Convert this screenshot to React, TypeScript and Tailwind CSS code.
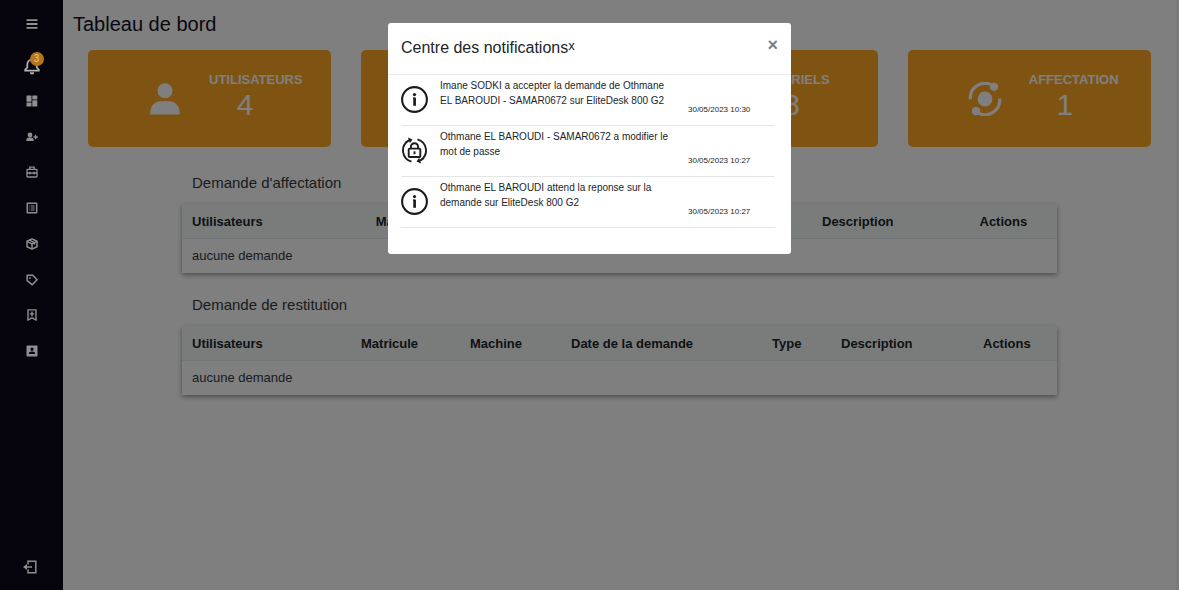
import React from "react";

function MenuIcon() {
  return (
    <svg width="12" height="10" viewBox="0 0 12 10" stroke="currentColor" strokeWidth="1.800">
      <path d="M.5 1.200h11M.5 5h11M.5 8.800h11" />
    </svg>
  );
}

function BellIcon() {
  return (
    <svg width="16" height="18" viewBox="0 0 16 18" fill="none" stroke="currentColor" strokeWidth="1.700">
      <path d="M8 2.500C5 2.500 3.300 4.800 3.300 7.500V10.500L1.200 12.600V13.700H14.800V12.600L12.700 10.500V7.500C12.700 4.800 11 2.500 8 2.500Z" />
      <path d="M5.800 15.200h4.400a2.200 2.200 0 0 1-4.400 0z" fill="currentColor" stroke="none" />
    </svg>
  );
}

function DashboardIcon() {
  return (
    <svg width="12" height="12" viewBox="0 0 12 12" fill="currentColor">
      <rect x=".5" y=".5" width="5" height="6.300" rx=".6" />
      <rect x=".5" y="7.600" width="5" height="3.900" rx=".6" />
      <rect x="6.300" y=".5" width="5" height="3.900" rx=".6" />
      <rect x="6.300" y="5.200" width="5" height="6.300" rx=".6" />
    </svg>
  );
}

function UserPlusIcon() {
  return (
    <svg width="12" height="10" viewBox="0 0 12 10" fill="currentColor">
      <circle cx="4" cy="3" r="2.400" />
      <path d="M.3 9V8.300C.3 6.500 1.500 5.500 3.200 5.500H4.800C6.500 5.500 7.700 6.500 7.700 8.300V9Z" />
      <path d="M8.900 2.800h1.400v1.500h1.500v1.400h-1.500v1.500H8.900V5.700H7.400V4.300h1.500z" />
    </svg>
  );
}

function ToolboxIcon() {
  return (
    <svg width="12" height="12" viewBox="0 0 12 12" fill="none" stroke="currentColor" strokeWidth="1.300">
      <rect x="1" y="3.300" width="10" height="7.700" rx=".7" />
      <path d="M3.800 3.300V1.200h4.400v2.100M1 7h10M3.900 5.800v2.600M8.100 5.800v2.600" />
    </svg>
  );
}

function ListIcon() {
  return (
    <svg width="12" height="12" viewBox="0 0 12 12" fill="none" stroke="currentColor" strokeWidth="1.500">
      <rect x="1.300" y="1.300" width="9.400" height="9.400" rx=".3" />
      <path d="M3.300 4h1M5 4h3.700M3.300 6h1M5 6h3.700M3.300 8h1M5 8h3.700" strokeWidth="1.100" />
    </svg>
  );
}

function PackageIcon() {
  return (
    <svg width="12" height="12" viewBox="0 0 12 12" fill="none" stroke="currentColor" strokeWidth="1.500">
      <path d="M6 .9L11 3.300V8.700L6 11.100L1 8.700V3.300Z" strokeLinejoin="round" />
      <path d="M1 3.400L6 5.900L11 3.400M6 5.900V11M3.400 2.200L8.500 4.700V6.500" />
    </svg>
  );
}

function TagIcon() {
  return (
    <svg width="12" height="12" viewBox="0 0 12 12" fill="none" stroke="currentColor" strokeWidth="1.500">
      <path d="M1.200 1.200H6.800L11 5.800L6.300 10.800L1.200 6.600Z" strokeLinejoin="round" />
      <circle cx="4" cy="4" r=".9" fill="currentColor" stroke="none" />
    </svg>
  );
}

function BookmarkPlusIcon() {
  return (
    <svg width="12" height="12" viewBox="0 0 12 12" fill="none" stroke="currentColor" strokeWidth="1.400">
      <path d="M2 .9H10V11L6 8.900L2 11Z" />
      <path d="M6 2.600V7.200M3.700 4.900H8.300" />
    </svg>
  );
}

function ContactIcon() {
  return (
    <svg width="12" height="12" viewBox="0 0 12 12" fill="currentColor">
      <path
        fillRule="evenodd"
        d="M1.200.5H10.800Q11.500.5 11.500 1.200V10.800Q11.500 11.500 10.800 11.500H1.200Q.5 11.500.5 10.800V1.200Q.5.5 1.200.5ZM6 2.500A1.700 1.700 0 1 0 6 5.900A1.700 1.700 0 1 0 6 2.500ZM2.800 9H9.200C9.200 7.300 7.800 6.600 6 6.600S2.800 7.300 2.800 9Z"
      />
    </svg>
  );
}

function LogoutIcon() {
  return (
    <svg width="14" height="14" viewBox="0 0 14 14" fill="none" stroke="currentColor" strokeWidth="1.500">
      <path d="M5 4.500V1.200H12.800V12.800H5V9.500" />
      <path d="M2.500 7H9" />
      <path d="M0 7L4 3.900V10.100Z" fill="currentColor" stroke="none" />
    </svg>
  );
}

function UserIcon() {
  return (
    <svg width="30" height="32" viewBox="0 0 30 32" fill="currentColor">
      <circle cx="15" cy="7.700" r="7.500" />
      <path d="M.3 31.500V29.500C.3 23 5 18.200 11 18.200H19C25 18.200 29.700 23 29.700 29.500V31.500Z" />
    </svg>
  );
}

function OrbitIcon() {
  return (
    <svg width="34" height="34" viewBox="0 0 34 34" fill="none" stroke="currentColor" strokeWidth="3.200">
      <circle cx="17" cy="17" r="7.400" fill="currentColor" stroke="none" />
      <path d="M2.400 17.500A14.600 14.600 0 0 1 24.500 3.500" />
      <path d="M31.600 16.500A14.600 14.600 0 0 1 9.500 30.500" />
      <circle cx="26" cy="4.800" r="4.100" fill="currentColor" stroke="none" />
      <circle cx="8" cy="29.200" r="4.100" fill="currentColor" stroke="none" />
    </svg>
  );
}

function BriefcaseIcon() {
  return (
    <svg width="34" height="32" viewBox="0 0 34 32" fill="none" stroke="currentColor" strokeWidth="3">
      <path d="M3 9H31V29H3ZM11 9V3H23V9M3 18H31" />
    </svg>
  );
}

function InfoIcon() {
  return (
    <svg width="27" height="27" viewBox="0 0 27 27" fill="none" stroke="currentColor">
      <circle cx="13.500" cy="13.500" r="12.400" strokeWidth="2.100" />
      <circle cx="13.500" cy="8.600" r="1.600" fill="currentColor" stroke="none" />
      <path d="M13.600 11.600V19.800" strokeWidth="2.700" />
      <path d="M12 12.200H13.600" strokeWidth="1.200" />
    </svg>
  );
}

function LockIcon() {
  return (
    <svg width="27" height="27" viewBox="0 0 27 27" fill="none" stroke="currentColor" strokeWidth="1.900">
      <path d="M7 4A11.600 11.600 0 0 0 10.500 24.700" />
      <path d="M20 23A11.600 11.600 0 0 0 16.500 2.300" />
      <path d="M3.200 5.800A12 12 0 0 1 7.500 2.800L7 .6L11.500 2.400L8.800 6.300L8.300 4.400" fill="currentColor" stroke="none" />
      <path d="M23.800 21.200A12 12 0 0 1 19.500 24.200L20 26.400L15.500 24.600L18.200 20.700L18.700 22.600" fill="currentColor" stroke="none" />
      <rect x="7.700" y="11.600" width="11.600" height="8.400" rx="1" />
      <path d="M9.900 11.500V9.800a3.600 3.600 0 0 1 7.200 0V11.500" />
      <path d="M13.500 14.300v3" strokeWidth="1.900" />
    </svg>
  );
}

const navItems = [
  { label: "Tableau de bord", icon: <DashboardIcon /> },
  { label: "Ajouter un utilisateur", icon: <UserPlusIcon /> },
  { label: "Matériels", icon: <ToolboxIcon /> },
  { label: "Liste", icon: <ListIcon /> },
  { label: "Stock", icon: <PackageIcon /> },
  { label: "Marques", icon: <TagIcon /> },
  { label: "Demandes", icon: <BookmarkPlusIcon /> },
  { label: "Profil", icon: <ContactIcon /> },
];

const cards = [
  { id: "users", label: "UTILISATEURS", value: "4", icon: <UserIcon /> },
  { id: "pending", label: "", value: "", icon: null },
  { id: "equipment", label: "MATERIELS", value: "8", icon: <BriefcaseIcon /> },
  { id: "assignment", label: "AFFECTATION", value: "1", icon: <OrbitIcon /> },
];

const assignmentColumns = [
  { name: "Utilisateurs", width: "w-[21%]" },
  { name: "Matricule", width: "w-[13%]" },
  { name: "Machine", width: "w-[13%]" },
  { name: "Date de la demande", width: "w-[25%]" },
  { name: "Description", width: "w-[18%]" },
  { name: "Actions", width: "w-[10%]" },
];

const returnColumns = [
  { name: "Utilisateurs", width: "w-[169px]" },
  { name: "Matricule", width: "w-[109px]" },
  { name: "Machine", width: "w-[101px]" },
  { name: "Date de la demande", width: "w-[201px]" },
  { name: "Type", width: "w-[69px]" },
  { name: "Description", width: "w-[142px]" },
  { name: "Actions", width: "w-[84px]" },
];

const notifications = [
  {
    text: "Imane SODKI a accepter la demande de Othmane EL BAROUDI - SAMAR0672 sur EliteDesk 800 G2",
    date: "30/05/2023 10:30",
    icon: <InfoIcon />,
  },
  {
    text: "Othmane EL BAROUDI - SAMAR0672 a modifier le mot de passe",
    date: "30/05/2023 10:27",
    icon: <LockIcon />,
  },
  {
    text: "Othmane EL BAROUDI attend la reponse sur la demande sur EliteDesk 800 G2",
    date: "30/05/2023 10:27",
    icon: <InfoIcon />,
  },
];

function Sidebar() {
  return (
    <aside className="relative z-20 flex w-[63px] shrink-0 flex-col items-center bg-[#05040c] text-[#8f8f8f]">
      <button aria-label="Menu" className="flex h-12 items-center">
        <MenuIcon />
      </button>
      <button aria-label="Notifications" className="relative flex h-[35px] items-center text-[#b4b4b4]">
        <BellIcon />
        <span className="absolute top-1 left-[6px] flex size-[14px] items-center justify-center rounded-full bg-[#b87419] text-[10px] leading-none text-[#d8c8b0]">
          3
        </span>
      </button>
      <nav className="flex h-[286px] flex-col">
        {navItems.map((item) => (
          <a key={item.label} href="#" aria-label={item.label} className="flex flex-1 items-center">
            {item.icon}
          </a>
        ))}
      </nav>
      <button aria-label="Déconnexion" className="mt-auto mb-[11px] flex h-6 items-center pr-1">
        <LogoutIcon />
      </button>
    </aside>
  );
}

function RequestTable({ title, columns }: { title: string; columns: { name: string; width: string }[] }) {
  return (
    <section>
      <h2 className="px-[10px] pb-[9px] text-[15px] leading-6 text-[#343a40]">{title}</h2>
      <table className="w-full table-fixed text-left text-[13px] leading-5 text-[#212529] shadow-[0_2px_5px_rgba(0,0,0,0.4)]">
        <thead>
          <tr className="border-b border-[#e4eaea] bg-[#f5f9f9]">
            {columns.map((c) => (
              <th key={c.name} className={`${c.width} px-[10px] pt-2 pb-[6px] font-bold whitespace-nowrap`}>
                {c.name}
              </th>
            ))}
          </tr>
        </thead>
        <tbody>
          <tr>
            <td colSpan={columns.length} className="px-[10px] py-[7px] text-[#343a40]">
              aucune demande
            </td>
          </tr>
        </tbody>
      </table>
    </section>
  );
}

function NotificationDialog() {
  return (
    <div
      role="dialog"
      aria-labelledby="notification-title"
      className="w-[403px] rounded-[3px] bg-white pb-[26px] text-[#212529]"
    >
      <header className="flex items-start justify-between border-b border-[#e9ecef] px-[13px] pt-[13px] pb-[14px]">
        <h2 id="notification-title" className="flex items-start text-[16px] leading-6">
          Centre des notifications
          <button className="text-[13px] leading-5">x</button>
        </h2>
        <button aria-label="Fermer" className="text-[18px] leading-[18px] font-bold text-[#7f7f7f]">
          ×
        </button>
      </header>
      <ul className="pr-4 pl-[13px]">
        {notifications.map((n, i) => (
          <li key={i} className="flex h-[51px] border-b border-[#e3e5e7]">
            <span className="pt-[11px] text-[#1c1c1c]">{n.icon}</span>
            <p className="ml-3 w-[234px] pt-[3px] text-[10px] leading-[15px]">{n.text}</p>
            <time className="ml-[14px] self-end pb-[10px] text-[8px] leading-[10px] whitespace-nowrap">{n.date}</time>
          </li>
        ))}
      </ul>
    </div>
  );
}

export default function App() {
  return (
    <div className="flex min-h-screen bg-white font-['Liberation_Sans',Arial,sans-serif]">
      <Sidebar />
      <main className="flex-1 border-r-[3px] border-[#f4f4f4]">
        <h1 className="px-[10px] pt-[9px] text-[20px] leading-[30px] text-[#11101d]">Tableau de bord</h1>
        <div className="grid grid-cols-4 gap-[30px] px-[25px] pt-[11px]">
          {cards.map((card) => (
            <article
              key={card.id}
              className="flex h-[97px] items-center rounded-[5px] bg-[#fea824] pl-[57px] text-white"
            >
              <span className="flex w-10 justify-center">{card.icon}</span>
              <div className="-mt-2 ml-6">
                <h2 className="text-[13px] leading-[20px] font-bold">{card.label}</h2>
                <p className="w-[72px] text-center text-[30px] leading-[30px]">{card.value}</p>
              </div>
            </article>
          ))}
        </div>
        <div className="mt-6 flex flex-col gap-5 px-[119px]">
          <RequestTable title="Demande d'affectation" columns={assignmentColumns} />
          <RequestTable title="Demande de restitution" columns={returnColumns} />
        </div>
      </main>
      <div className="fixed inset-0 z-10 flex items-start justify-center bg-black/50 pt-[23px]">
        <NotificationDialog />
      </div>
    </div>
  );
}
